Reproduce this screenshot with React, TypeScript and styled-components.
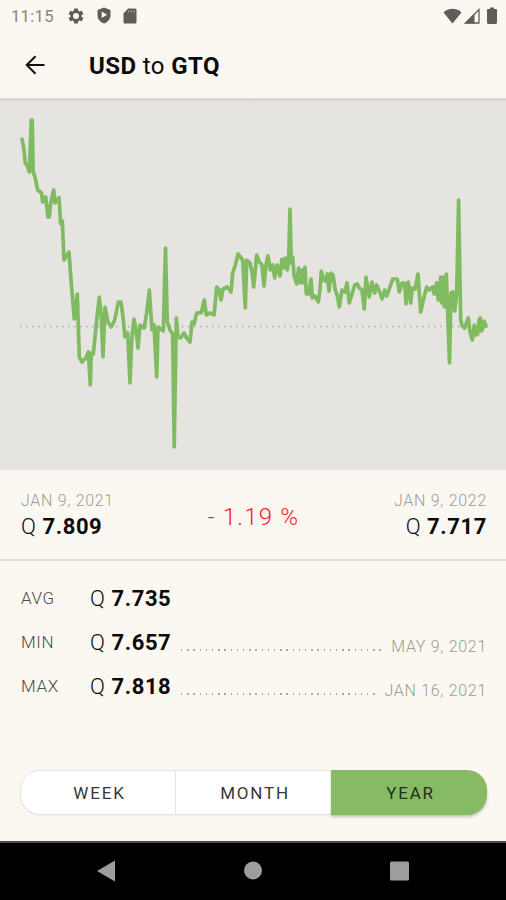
import React from "react";
import styled, { createGlobalStyle } from "styled-components";

const Global = createGlobalStyle`
  * { box-sizing: border-box; }
  html, body { margin: 0; padding: 0; }
  body { background: #fbf8f1; font-family: Roboto, "Liberation Sans", sans-serif; color: #0b0b0b; }
  svg { display: block; }
`;

const Screen = styled.div`
  width: 506px;
  height: 900px;
  display: flex;
  flex-direction: column;
  overflow: hidden;
  background: #fbf8f1;
`;

const StatusBar = styled.div`
  height: 32px;
  display: flex;
  align-items: center;
  padding: 0 9px 1px 11px;
  color: #5f5d5a;
`;

const Clock = styled.span`
  width: 56px;
  padding-top: 1px;
  font-size: 16.5px;
  letter-spacing: 0.35px;
  color: #85837f;
`;

const StatusIcons = styled.div<{ $gap: number; $end?: boolean }>`
  display: flex;
  align-items: center;
  gap: ${(p) => p.$gap}px;
  margin-left: ${(p) => (p.$end ? "auto" : "0")};
`;

const BatterySlot = styled.div`
  padding-left: 5px;
`;

const Header = styled.header`
  height: 67px;
  display: flex;
  align-items: center;
  padding: 0 0 1px 24px;
  border-bottom: 1px solid #dedbd6;
`;

const Title = styled.h1`
  margin: 2px 0 0 43px;
  font-size: 24px;
  line-height: 30px;
  font-weight: 400;
  letter-spacing: 0.4px;
  b { font-weight: 700; }
`;

const ChartArea = styled.section`
  height: 371px;
  background: linear-gradient(#d3d0cc 0, #e6e4e0 3px);
  border-bottom: 1px solid #e9e7e2;
`;

const Summary = styled.section`
  height: 91px;
  display: flex;
  justify-content: space-between;
  padding: 21px 19px 0 21px;
  border-bottom: 2px solid #e2dfda;
`;

const Endpoint = styled.div<{ $right?: boolean }>`
  width: 110px;
  text-align: ${(p) => (p.$right ? "right" : "left")};
`;

const DateText = styled.div`
  font-size: 16px;
  line-height: 20px;
  font-weight: 300;
  letter-spacing: 0.7px;
  color: #9d9b97;
  white-space: nowrap;
`;

const Price = styled.div`
  padding-top: 1px;
  font-size: 22px;
  line-height: 30px;
  font-weight: 300;
  letter-spacing: 0.6px;
  white-space: nowrap;
  b { font-weight: 700; }
`;

const Change = styled.div`
  padding-top: 11px;
  margin-right: 1px;
  font-size: 24px;
  line-height: 30px;
  font-weight: 300;
  letter-spacing: 1.2px;
  color: #fb1a22;
`;

const Stats = styled.section`
  height: 209px;
  padding: 15px 19px 0 21px;
`;

const StatRow = styled.div`
  height: 44px;
  display: flex;
  align-items: center;
`;

const StatLabel = styled.span`
  width: 69px;
  font-size: 17px;
  font-weight: 300;
  letter-spacing: 0.6px;
  color: #4c4b49;
`;

const StatDate = styled(DateText)`
  padding-top: 9px;
`;

const Leader = styled.span`
  flex: 1;
  height: 2px;
  margin: 15px 9px 0 10px;
  background: repeating-linear-gradient(90deg, #aaa7a2 0 1.5px, transparent 1.5px 6.2px);
`;

const Tabs = styled.div`
  display: grid;
  grid-template-columns: 156px 155px 156px;
  height: 45px;
  margin: 0 19px 0 20px;
`;

const Tab = styled.button<{ $active?: boolean; $edge?: "left" | "right" }>`
  padding: 0 0 0 3px;
  font-family: inherit;
  font-size: 17px;
  font-weight: 400;
  letter-spacing: 1.8px;
  color: ${(p) => (p.$active ? "#20301a" : "#383838")};
  background: ${(p) => (p.$active ? "#86ba65" : "#ffffff")};
  border: ${(p) => (p.$active ? "0" : "1px solid #e5e4e0")};
  border-right: ${(p) => (p.$edge === "left" ? "1px solid #e5e4e0" : "0")};
  border-left-width: ${(p) => (p.$edge === "left" ? "1px" : "0")};
  border-radius: ${(p) => (p.$edge === "left" ? "20px 0 0 20px" : p.$edge === "right" ? "0 20px 20px 0" : "0")};
  box-shadow: ${(p) => (p.$active ? "0 2px 3px rgba(0,0,0,.22)" : "0 1px 1px rgba(0,0,0,.03)")};
`;

const NavBar = styled.nav`
  height: 59px;
  margin-top: auto;
  display: flex;
  align-items: center;
  justify-content: space-between;
  padding: 0 96px 2px 97px;
  background: #000;
  border-top: 2px solid #4c4b49;
`;

const RATES: [number, number][] = [
  [22, 139], [23.7, 148], [25.3, 163], [27.3, 166], [29.3, 172], [31.3, 120], [32.2, 120], [33.2, 172], [35, 177], [37.7, 190],
  [41.5, 193], [42.7, 202], [45.7, 197], [48, 217], [49.3, 217], [50.7, 203], [53.7, 190], [55, 203], [59, 197.7],
  [60.7, 224], [62.3, 221], [64, 260], [69, 252], [71, 280], [74.3, 319], [77.3, 294], [79.3, 357], [82, 362],
  [86, 358], [88.3, 352], [90.3, 385], [91.3, 353], [93.3, 354], [96.7, 320], [99.3, 297], [101.3, 317], [103, 357],
  [105, 307], [108, 322], [111.3, 327], [114.7, 320], [118.3, 302], [121, 302], [123, 317], [125, 337], [127.7, 333],
  [130, 383], [131.7, 340], [134, 319], [136, 330], [138, 348], [140, 325], [144, 328], [146.7, 313], [149.3, 290],
  [152, 330], [154, 325], [156.7, 377], [158, 327], [160.7, 329], [163.3, 331], [165.5, 248], [167.3, 322], [170, 330],
  [172.7, 334], [174.2, 447], [176.3, 318], [178, 337], [180.5, 338], [184, 333], [186.7, 338], [190, 342], [192, 322],
  [194, 324], [196.7, 313], [201.3, 312.7], [204.3, 300], [206.3, 315], [210, 313], [214, 315], [215.7, 298],
  [216.7, 287], [219.3, 290], [221, 300], [223, 289], [227.3, 287], [231, 292], [232.7, 273], [235.3, 265],
  [238, 254], [242.7, 260], [245.3, 308], [246.7, 260], [250, 263], [252, 272], [253.7, 287], [255.3, 270],
  [256.7, 255], [259.3, 262], [262, 265], [264, 286], [266, 265], [268, 256], [270.3, 270], [272.7, 265],
  [274.7, 278], [277, 265], [280, 276], [282, 259], [283.5, 268], [285.5, 258], [287.3, 270], [288.7, 257], [290, 209],
  [291.3, 263], [292.7, 257], [294, 275], [296.7, 284], [298.7, 268], [300.7, 283], [302.3, 270], [303.5, 283],
  [305, 267], [306.3, 294], [309, 294], [311, 279], [312.3, 298], [315, 296], [318.3, 302], [320, 290],
  [321.3, 271], [323.7, 280], [325.7, 281], [327.3, 274], [329, 291], [331, 273], [333, 275], [335.3, 290],
  [337.3, 296], [339.3, 307], [342, 290], [345, 292], [347, 283], [349.3, 303], [352.3, 293], [354.7, 285],
  [357.3, 284], [359.3, 288], [362, 290], [364.3, 309], [366, 277], [369.3, 297], [372, 282], [374.7, 293],
  [376.7, 285], [379.3, 291], [382, 299], [384.7, 290], [386.7, 296], [390, 287], [392.7, 279], [397.3, 279],
  [399.3, 292], [402, 283], [404.7, 283], [406, 304], [408.3, 282], [410.7, 303], [412.3, 288], [415, 289],
  [418, 274], [419.3, 293], [420.7, 312], [423.3, 300], [426.7, 287], [429.3, 290], [432.7, 287], [434.3, 294],
  [436.7, 283], [438.3, 300], [440.7, 277], [441.7, 303], [443.7, 277], [444.3, 307], [446.3, 274], [447.7, 313],
  [449.5, 363], [451, 293], [453, 292], [454.7, 311], [456.7, 293], [458.6, 200], [460.7, 320], [462.3, 326], [464.7, 328],
  [468.3, 318], [470, 332], [472.3, 340], [474.3, 325], [475.8, 335], [477.7, 334], [479, 320], [480.3, 318], [481.5, 331],
  [482.7, 328], [484, 321], [486, 326],
];

const CHART_TOP = 99;

function RateChart() {
  const points = RATES.map(([x, y]) => `${x},${y - CHART_TOP}`).join(" ");
  return (
    <svg width="506" height="370" viewBox="0 0 506 370">
      <line x1="20" y1="227.5" x2="460" y2="227.5" stroke="#aaa8a4" strokeWidth="1.5" strokeDasharray="1.5 4.5" />
      <polyline points={points} fill="none" stroke="#81bb61" strokeWidth="3.7" strokeLinejoin="round" strokeLinecap="round" />
    </svg>
  );
}

function GearIcon() {
  return (
    <svg width="18" height="18" viewBox="0 0 24 24" fill="currentColor">
      <path fillRule="evenodd" d="M19.43 12.98c.04-.32.07-.64.07-.98s-.03-.66-.07-.98l2.11-1.65c.19-.15.24-.42.12-.64l-2-3.46c-.12-.22-.39-.3-.61-.22l-2.49 1c-.52-.4-1.08-.73-1.69-.98l-.38-2.65A.49.49 0 0 0 14 2h-4c-.25 0-.46.18-.49.42l-.38 2.65c-.61.25-1.17.59-1.69.98l-2.49-1c-.23-.09-.49 0-.61.22l-2 3.46c-.13.22-.07.49.12.64l2.11 1.65c-.04.32-.07.65-.07.98s.03.66.07.98l-2.11 1.65c-.19.15-.24.42-.12.64l2 3.46c.12.22.39.3.61.22l2.49-1c.52.4 1.08.73 1.69.98l.38 2.65c.03.24.24.42.49.42h4c.25 0 .46-.18.49-.42l.38-2.65c.61-.25 1.17-.59 1.69-.98l2.49 1c.23.09.49 0 .61-.22l2-3.46c.12-.22.07-.49-.12-.64zM12 16a4 4 0 1 1 0-8 4 4 0 0 1 0 8z" />
    </svg>
  );
}

function ShieldIcon() {
  return (
    <svg width="14" height="17" viewBox="0 0 14 17">
      <path d="M7 .5 13.5 3v5.2c0 4-2.7 6.8-6.5 8.3C3.2 15 .5 12.2.5 8.2V3z" fill="currentColor" />
      <path d="M4.700 4.500v6.600l5.400-3.300z" fill="#fbf8f1" />
    </svg>
  );
}

function SdCardIcon() {
  return (
    <svg width="14" height="16" viewBox="0 0 14 16">
      <path d="M5.2.5H12A1.5 1.5 0 0 1 13.5 2v12a1.5 1.5 0 0 1-1.5 1.5H2A1.5 1.5 0 0 1 .5 14V5.2z" fill="currentColor" />
      <path d="M5.5 2.500v1.800M8.200 2.500v1.800M11 2.500v1.800" stroke="#a5a29d" strokeWidth="1.2" />
    </svg>
  );
}

function WifiIcon() {
  return (
    <svg width="19" height="16" viewBox="0 0 19 16">
      <path d="M.5 4.500C3 2 6 .8 9.500.8S16 2 18.500 4.500L9.500 15.500z" fill="currentColor" />
    </svg>
  );
}

function SignalIcon() {
  return (
    <svg width="16" height="16" viewBox="0 0 16 16">
      <path d="M1.500 15 15 1.500V15z" fill="none" stroke="currentColor" strokeWidth="1.3" />
      <path d="M1 15.500 10.500 6v9.500z" fill="currentColor" />
    </svg>
  );
}

function BatteryIcon() {
  return (
    <svg width="10" height="17" viewBox="0 0 10 17">
      <path d="M3 .5h4V2h1.800c.7 0 1.200.5 1.200 1.200v12.600c0 .7-.5 1.200-1.200 1.200H1.200C.5 17 0 16.500 0 15.800V3.200C0 2.500.5 2 1.200 2H3z" fill="currentColor" />
    </svg>
  );
}

function BackArrow() {
  return (
    <svg width="22" height="22" viewBox="0 0 22 22" fill="none" stroke="#111" strokeWidth="2">
      <path d="M20.500 11H3M11.500 2.200 2.700 11l8.800 8.800" />
    </svg>
  );
}

const STATS = [
  { label: "AVG", value: "7.735" },
  { label: "MIN", value: "7.657", date: "MAY 9, 2021" },
  { label: "MAX", value: "7.818", date: "JAN 16, 2021" },
];

export default function App() {
  return (
    <Screen>
      <Global />
      <StatusBar>
        <Clock>11:15</Clock>
        <StatusIcons $gap={12}>
          <GearIcon />
          <ShieldIcon />
          <SdCardIcon />
        </StatusIcons>
        <StatusIcons $gap={2} $end>
          <WifiIcon />
          <SignalIcon />
          <BatterySlot><BatteryIcon /></BatterySlot>
        </StatusIcons>
      </StatusBar>
      <Header>
        <BackArrow />
        <Title><b>USD</b> to <b>GTQ</b></Title>
      </Header>
      <ChartArea><RateChart /></ChartArea>
      <Summary>
        <Endpoint>
          <DateText>JAN 9, 2021</DateText>
          <Price>Q <b>7.809</b></Price>
        </Endpoint>
        <Change>- 1.19 %</Change>
        <Endpoint $right>
          <DateText>JAN 9, 2022</DateText>
          <Price>Q <b>7.717</b></Price>
        </Endpoint>
      </Summary>
      <Stats>
        {STATS.map((s) => (
          <StatRow key={s.label}>
            <StatLabel>{s.label}</StatLabel>
            <Price>Q <b>{s.value}</b></Price>
            {s.date && <Leader />}
            {s.date && <StatDate>{s.date}</StatDate>}
          </StatRow>
        ))}
      </Stats>
      <Tabs>
        <Tab $edge="left">WEEK</Tab>
        <Tab>MONTH</Tab>
        <Tab $active $edge="right">YEAR</Tab>
      </Tabs>
      <NavBar>
        <svg width="18" height="22" viewBox="0 0 18 22"><path d="M0 11 18 .5v21z" fill="#9d9d9d" /></svg>
        <svg width="19" height="19" viewBox="0 0 19 19"><circle cx="10" cy="9.500" r="9" fill="#9d9d9d" /></svg>
        <svg width="20" height="20" viewBox="0 0 20 20"><rect x="0" y=".5" width="19" height="19" rx="1.5" fill="#9d9d9d" /></svg>
      </NavBar>
    </Screen>
  );
}
